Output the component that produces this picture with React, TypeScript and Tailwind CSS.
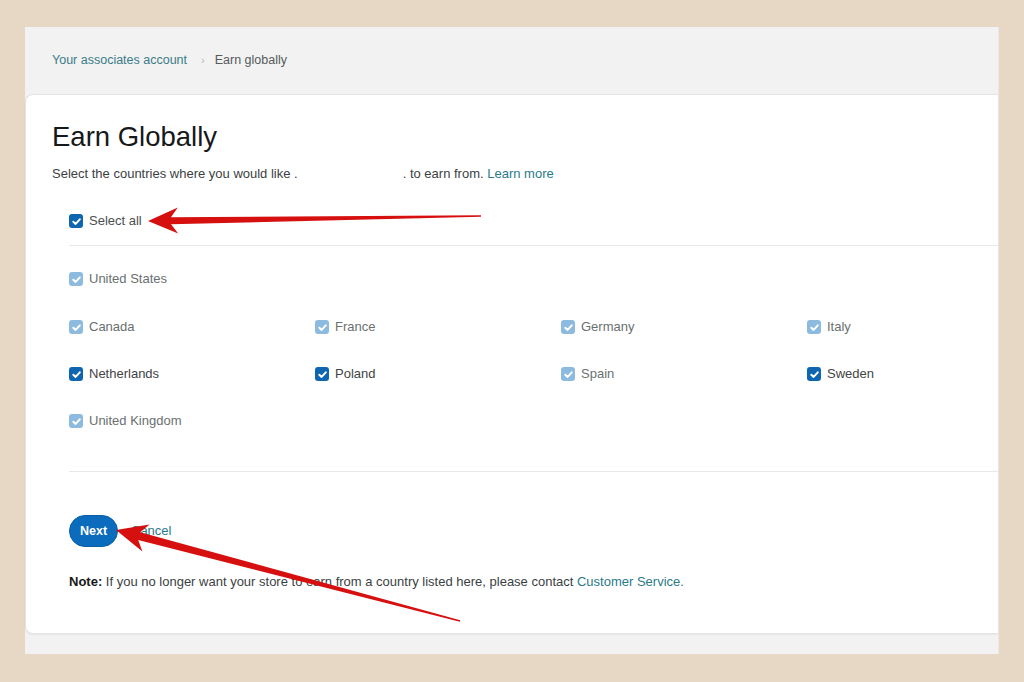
import React from 'react';

type Pt = [number, number];

function arrowPoints(tip: Pt, tail: Pt, L = 27, W = 13, w1 = 7, w0 = 1.6): string {
  const dx = tail[0] - tip[0];
  const dy = tail[1] - tip[1];
  const len = Math.hypot(dx, dy);
  const ux = dx / len;
  const uy = dy / len;
  const nx = -uy;
  const ny = ux;
  const p = (a: number, b: number): string =>
    `${(tip[0] + ux * a + nx * b).toFixed(1)},${(tip[1] + uy * a + ny * b).toFixed(1)}`;
  return [
    p(0, 0),
    p(L + 3, W),
    p(L - 4, w1 / 2),
    p(len, w0 / 2),
    p(len, -w0 / 2),
    p(L - 4, -w1 / 2),
    p(L + 3, -W),
  ].join(' ');
}

function Box({ dark }: { dark: boolean }) {
  return (
    <span
      className={`w-[14px] h-[14px] rounded-[3px] flex items-center justify-center shrink-0 ${
        dark ? 'bg-[#0f66b0]' : 'bg-[#8dbbe0]'
      }`}
    >
      <svg width="11" height="11" viewBox="0 0 10 10">
        <path
          d="M2.1 5.2 L4.2 7.2 L8 3"
          stroke="white"
          strokeWidth="1.8"
          fill="none"
          strokeLinecap="round"
          strokeLinejoin="round"
        />
      </svg>
    </span>
  );
}

function Item({ label, dark }: { label: string; dark: boolean }) {
  return (
    <div className="flex items-center gap-[6px] h-[18px]">
      <Box dark={dark} />
      <span className={`text-[13px] leading-[18px] ${dark ? 'text-[#3f4444]' : 'text-[#6a6f70]'}`}>{label}</span>
    </div>
  );
}

export default function App() {
  return (
    <div className="relative w-[1024px] h-[682px] overflow-hidden bg-[#e6d8c4] pt-[27px] pl-[25px] font-['Liberation_Sans',Arial,sans-serif]">
      <div className="w-[974px] h-[627px] bg-[#f2f2f2] flex flex-col border-r border-[#e9e9e9]">
        <div className="h-[67px] pl-[27px] flex items-center text-[12.5px]">
          <span className="text-[#3a7c88]">Your associates account</span>
          <span className="text-[#b5b5b5] ml-[14px] mr-[10px] text-[11px]">›</span>
          <span className="text-[#555a5a]">Earn globally</span>
        </div>
        <div className="h-[540px] bg-white rounded-l-[8px] border border-r-0 border-[#e4e4e4] shadow-[0_1px_2px_rgba(0,0,0,0.05)] pl-[26px] pt-[25px] flex flex-col">
          <h1 className="text-[27.5px] leading-[34px] text-[#16191a] font-normal">Earn Globally</h1>
          <p className="mt-[11px] text-[13px] leading-[18px] text-[#3b3f3f]">
            Select the countries where you would like .<span className="inline-block w-[105px]"></span>. to earn from.{' '}
            <span className="text-[#2a7a8a]">Learn more</span>
          </p>
          <div className="mt-[29px] ml-[17px] flex items-center gap-[6px] h-[18px]">
            <Box dark={true} />
            <span className="text-[13px] leading-[18px] text-[#4a4f4f]">Select all</span>
          </div>
          <div className="mt-[15px] ml-[17px] h-px bg-[#e8e8e8]"></div>
          <div className="mt-[24px] ml-[17px] grid grid-cols-[246px_246px_246px_246px] gap-y-[29px]">
            <div className="col-span-4 mb-[1px]">
              <Item label="United States" dark={false} />
            </div>
            <Item label="Canada" dark={false} />
            <Item label="France" dark={false} />
            <Item label="Germany" dark={false} />
            <Item label="Italy" dark={false} />
            <Item label="Netherlands" dark={true} />
            <Item label="Poland" dark={true} />
            <Item label="Spain" dark={false} />
            <Item label="Sweden" dark={true} />
            <div className="col-span-4">
              <Item label="United Kingdom" dark={false} />
            </div>
          </div>
          <div className="mt-[41px] ml-[17px] h-px bg-[#e8e8e8]"></div>
          <div className="mt-[43px] ml-[17px] flex items-center gap-[13px]">
            <button className="w-[49px] h-[32px] rounded-full bg-[#0b6cbd] border border-[#0a5ea6] text-white text-[12.5px] font-bold">
              Next
            </button>
            <span className="text-[13px] text-[#2a7a8a]">Cancel</span>
          </div>
          <p className="mt-[26px] ml-[17px] text-[13px] leading-[18px] text-[#3b3f3f]">
            <span className="font-bold text-[#16191a]">Note:</span> If you no longer want your store to earn from a country
            listed here, please contact <span className="text-[#2a7a8a]">Customer Service.</span>
          </p>
        </div>
      </div>
      <svg className="absolute left-0 top-0 pointer-events-none" width="1024" height="682" viewBox="0 0 1024 682">
        <polygon points={arrowPoints([148, 221], [481, 216])} fill="#d60f0f" />
        <polygon points={arrowPoints([116, 530], [460, 621], 28, 14, 8, 1.6)} fill="#d60f0f" />
      </svg>
    </div>
  );
}
